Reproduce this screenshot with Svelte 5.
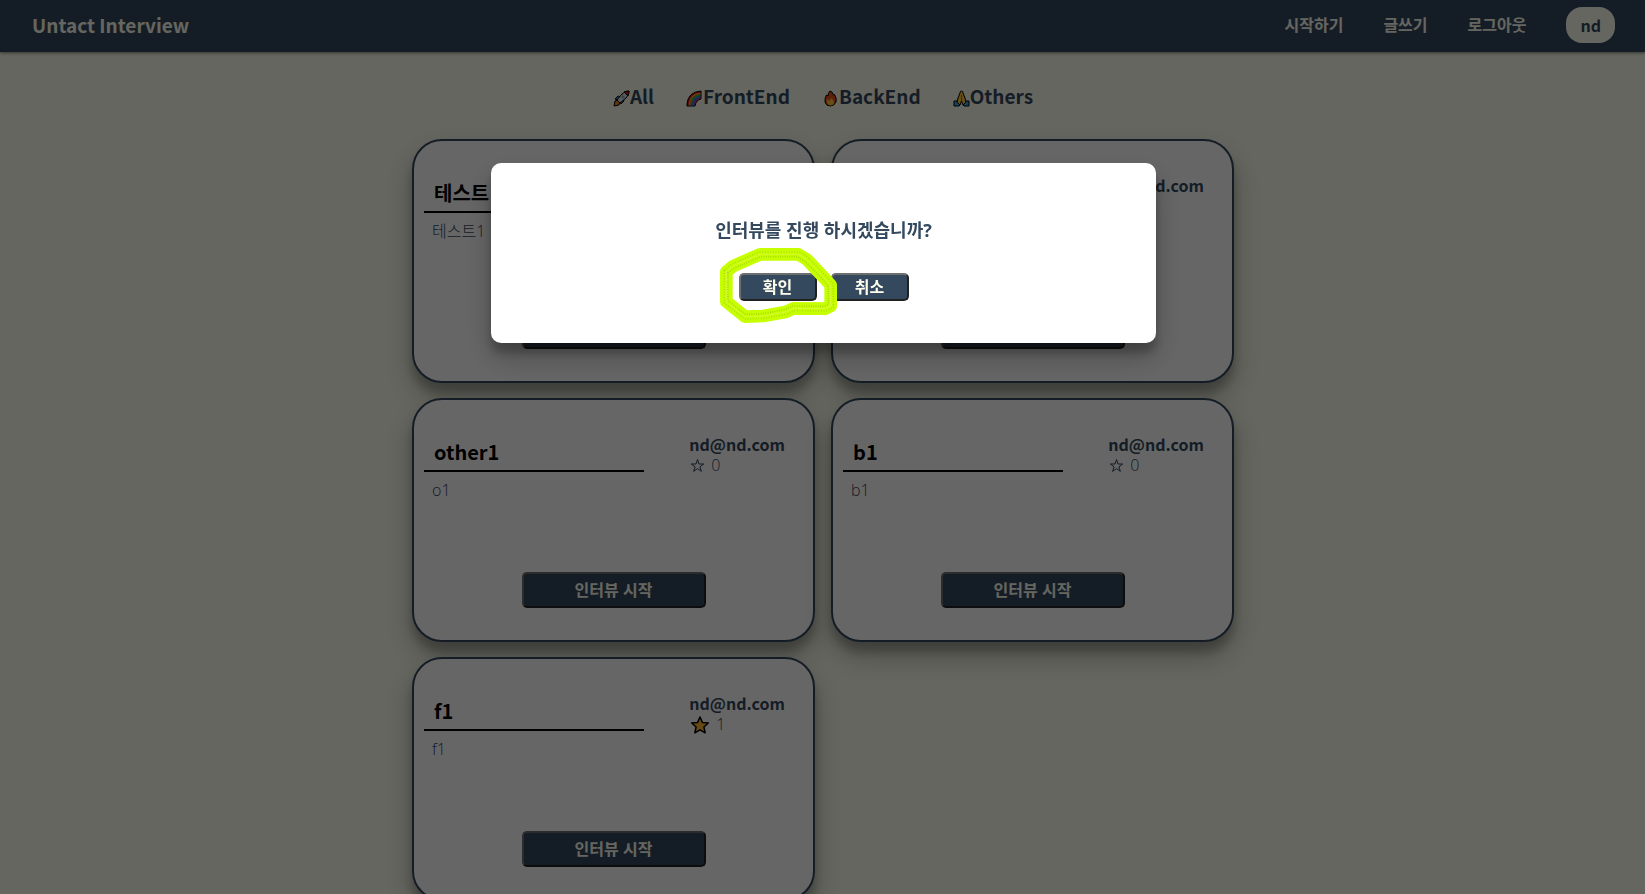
<script>
  const nav = ['시작하기', '글쓰기', '로그아웃'];
  const filters = [
    { icon: 'rocket', label: 'All' },
    { icon: 'rainbow', label: 'FrontEnd' },
    { icon: 'fire', label: 'BackEnd' },
    { icon: 'pray', label: 'Others' },
  ];
  const cards = [
    { title: '테스트', text: '테스트1', stars: 0 },
    { title: '', text: '', stars: 0 },
    { title: 'other1', text: 'o1', stars: 0 },
    { title: 'b1', text: 'b1', stars: 0 },
    { title: 'f1', text: 'f1', stars: 1 },
  ];
  const loop =
    'M109 215 L109 305 L165 350 L220 348 L290 335 L310 325 L405 326 L422 318 L422 255 L385 215 L350 178 L325 163 L210 163 L130 198 Z';
  const loopInner =
    'M114 218 L114 302 L167 343 L218 341 L287 328 L308 318 L402 319 L415 313 L415 258 L380 219 L345 184 L322 170 L212 170 L134 204 Z';
  const loopOuter =
    'M103 211 L103 309 L163 357 L222 355 L293 342 L312 332 L408 333 L430 323 L430 252 L390 210 L354 172 L328 156 L208 156 L126 192 Z';
</script>

<header>
  <a class="brand" href="#home">Untact Interview</a>
  <nav>
    {#each nav as item}
      <a href="#{item}">{item}</a>
    {/each}
    <a class="user" href="#user">nd</a>
  </nav>
</header>

<main>
  <div class="filters">
    {#each filters as f}
      <button class="filter">
        <svg viewBox="0 0 17 17" aria-hidden="true">
          {#if f.icon === 'rocket'}
            <path d="M1 16 L2 11 L5 10 L7 12 L6 15 Z" fill="#f58220" stroke="#000" />
            <path d="M2 9 L5 6 L8 7 L6 10 Z M8 14 L11 11 L10 8 L7 11 Z" fill="#35a8e0" stroke="#000" />
            <path d="M4 10 L9 4 Q12 1 16 1 Q16 5 13 8 L7 13 Z" fill="#dde3e8" stroke="#000" />
            <path d="M11 2 Q13 1 16 1 Q16 4 15 6 Z" fill="#e81224" stroke="#000" />
            <circle cx="10" cy="7" r="1.5" fill="#9aa6b2" />
          {:else if f.icon === 'rainbow'}
            <path d="M1 16 V14 Q2 2 15 1 V9 Q10 10 9 16 Z" fill="#e81224" stroke="#000" />
            <path d="M3.5 15.5 Q4 4 14.5 3.5" fill="none" stroke="#f7a01d" stroke-width="1.6" />
            <path d="M5 15.5 Q5.500 6 14.5 5" fill="none" stroke="#2fb457" stroke-width="1.6" />
            <path d="M6.500 15.5 Q7 7 14.5 6.500" fill="none" stroke="#1d8fe0" stroke-width="1.6" />
            <path d="M8 15.5 Q9 9 14.5 8.200" fill="none" stroke="#8a4bc8" stroke-width="1.3" />
          {:else if f.icon === 'fire'}
            <path d="M8 1 Q10 1 11.500 5 L12.500 4.500 Q15 8 14 12 Q12 16 8.500 16 Q4 16 3 12 Q2.500 8 4.500 5 L6 6 Q6 3 8 1 Z" fill="#e8501c" stroke="#000" />
            <path d="M5 12 Q5 10 6 9 L7.500 11 L9.500 8 Q12 11 12 13 Q11 15.500 8.500 15.500 Q5.500 15 5 12 Z" fill="#ffc83d" />
          {:else}
            <path d="M1 11 L5 11 L7 15 L6 16 H1 Z M16 11 L12 11 L10 15 L11 16 H16 Z" fill="#35a8e0" stroke="#000" />
            <path d="M8.500 1 Q7 1 7 3 L5 8 L4 12 L7 15 L8.500 11 L10 15 L13 12 L12 8 L10 3 Q10 1 8.500 1 Z" fill="#ffc83d" stroke="#000" />
            <path d="M8.500 5 V11" stroke="#a46b00" />
          {/if}
        </svg><span>{f.label}</span>
      </button>
    {/each}
  </div>

  <div class="grid">
    {#each cards as card}
      <article>
        <div class="top">
          <h2>{card.title}</h2>
          <div class="meta">
            <strong>nd@nd.com</strong>
            <div class="stars" class:starred={card.stars > 0}>
              {#if card.stars}
                <svg viewBox="0 0 20 20" aria-hidden="true">
                  <path d="M10 2 L12.400 7.400 L18.300 8 L13.900 12 L15.200 17.800 L10 14.800 L4.800 17.800 L6.100 12 L1.700 8 L7.600 7.400 Z" fill="#ffb92e" stroke="#000" stroke-width="1.5" stroke-linejoin="round" />
                </svg>
              {:else}
                <svg viewBox="0 0 15 15" aria-hidden="true">
                  <path d="M7.500 1.500 L9 6 H13.800 L9.900 8.800 L11.400 13.400 L7.500 10.600 L3.600 13.400 L5.100 8.800 L1.200 6 H6 Z" fill="none" stroke="#34495e" />
                </svg>
              {/if}
              <span>{card.stars}</span>
            </div>
          </div>
        </div>
        <p>{card.text}</p>
        <button class="start">인터뷰 시작</button>
      </article>
    {/each}
  </div>
</main>

<div class="backdrop">
  <div class="modal" role="dialog" aria-modal="true" aria-labelledby="question">
    <p id="question">인터뷰를 진행 하시겠습니까?</p>
    <div class="actions">
      <button>확인</button>
      <button>취소</button>
      <svg class="mark" viewBox="87 138 360 240" aria-hidden="true">
        <path d={loop} fill="none" stroke="#c8ff00" stroke-width="38" stroke-linejoin="round" />
        <path d={loopInner} fill="none" stroke="#a4dc00" stroke-width="5" stroke-dasharray="3 4" />
        <path d={loopOuter} fill="none" stroke="#a8e000" stroke-width="5" stroke-dasharray="3 5" />
        <path d={loop} fill="none" stroke="#dcf24a" stroke-width="3" stroke-dasharray="12 5" />
      </svg>
    </div>
  </div>
</div>

<style>
  :global(body) {
    background: #fffff0;
    color: #34495e;
    font-family: 'Open Sans', 'Noto Sans CJK KR', sans-serif;
    font-size: 16px;
    overflow: hidden;
  }
  a {
    color: inherit;
    text-decoration: none;
  }
  button {
    font: inherit;
    cursor: pointer;
  }
  header {
    display: flex;
    align-items: center;
    justify-content: space-between;
    box-sizing: border-box;
    height: 52px;
    padding: 0 30px 2px 32px;
    background: #34495e;
    color: #fffff0;
    box-shadow: 0 1px 3px rgba(0, 0, 0, 0.5);
  }
  .brand,
  .filter,
  .user,
  .meta strong,
  h2 {
    font-family: 'Noto Sans CJK KR', sans-serif;
    font-weight: 700;
  }
  .brand {
    font-size: 19px;
    line-height: 28px;
  }
  nav {
    display: flex;
    align-items: center;
    gap: 40px;
    font-weight: 700;
  }
  nav a {
    line-height: 36px;
  }
  .user {
    padding: 0 14px;
    border-radius: 16px;
    background: #fffff0;
    color: #34495e;
  }
  main {
    padding-left: 1px;
  }
  .filters {
    display: flex;
    justify-content: center;
    gap: 32px;
    padding: 28px 0 27px;
  }
  .filter {
    display: flex;
    align-items: center;
    padding: 0;
    border: 0;
    background: none;
    color: #34495e;
    font-size: 19px;
    line-height: 32px;
  }
  .filter svg {
    width: 17px;
    height: 17px;
    margin-top: 4px;
  }
  .grid {
    display: grid;
    grid-template-columns: 1fr 1fr;
    gap: 15px 16px;
    width: 50%;
    margin: 0 auto;
  }
  article {
    display: flex;
    flex-direction: column;
    box-sizing: border-box;
    min-height: 244px;
    padding: 32px 10px;
    border: 2px solid #34495e;
    border-radius: 30px;
    background: #fff;
    box-shadow: 0 14px 28px rgba(0, 0, 0, 0.25), 0 10px 10px rgba(0, 0, 0, 0.22);
  }
  .top {
    display: flex;
    align-items: flex-start;
    justify-content: space-between;
  }
  h2 {
    width: 58%;
    box-sizing: border-box;
    min-height: 40px;
    margin: 0;
    padding: 4px 10px 2px;
    border-bottom: 2px solid #000;
    color: #000;
    font-size: 20px;
    line-height: 32px;
  }
  .meta {
    width: 30%;
    padding-top: 2px;
    line-height: 21px;
  }
  .meta strong {
    display: block;
  }
  .stars {
    display: flex;
    align-items: center;
    gap: 6px;
    height: 21px;
    padding-left: 1px;
    font-weight: 300;
  }
  .stars svg {
    width: 15px;
    height: 15px;
  }
  .starred svg {
    width: 20px;
    height: 20px;
  }
  article p {
    margin: 2px 8px 0;
    font-weight: 300;
    line-height: 24px;
  }
  .start {
    width: 184px;
    height: 36px;
    margin: auto auto 0;
  }
  .start,
  .actions button {
    padding: 0;
    border: 2px solid;
    border-color: #6e6e6e #212121 #212121 #6e6e6e;
    border-radius: 5px;
    background: #34495e;
    color: #fffff0;
    font-weight: 700;
    line-height: 24px;
  }
  .backdrop {
    position: fixed;
    inset: 0;
    display: flex;
    align-items: flex-start;
    justify-content: center;
    padding: 163px 0 0 2px;
    background: rgba(0, 0, 0, 0.6);
  }
  .modal {
    width: 40%;
    padding: 53px 4px 42px;
    border-radius: 10px;
    background: #fff;
    box-shadow: 0 14px 28px rgba(0, 0, 0, 0.25), 0 10px 10px rgba(0, 0, 0, 0.22);
    text-align: center;
  }
  .modal p {
    margin: 0 0 29px;
    font-size: 18px;
    font-weight: 700;
    line-height: 28px;
  }
  .actions {
    position: relative;
    display: flex;
    justify-content: center;
    gap: 14px;
    width: 170px;
    margin: 0 auto;
  }
  .actions button {
    width: 78px;
    height: 28px;
  }
  .mark {
    position: absolute;
    left: -20px;
    top: -27px;
    width: 120px;
    height: 80px;
    pointer-events: none;
  }
</style>
